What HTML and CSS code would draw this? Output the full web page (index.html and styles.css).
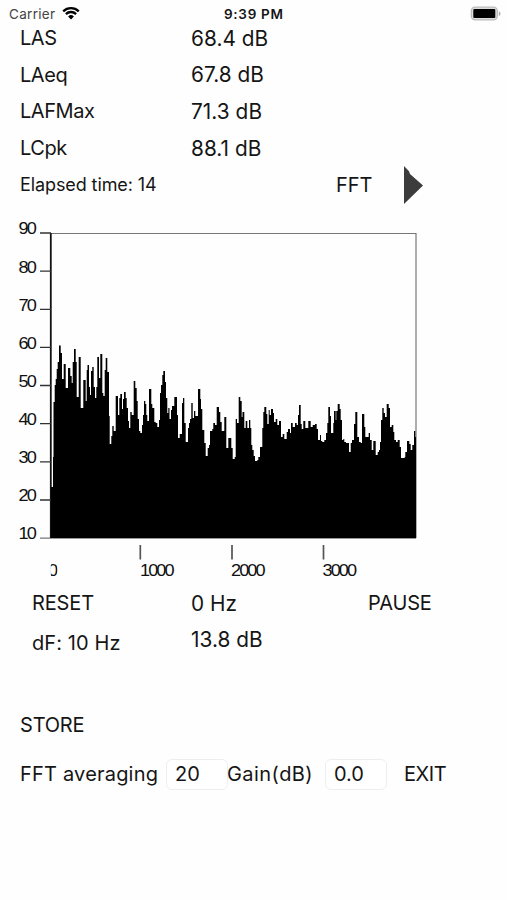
FILE: index.html
```
<!DOCTYPE html>
<html lang="en">
<head>
    <meta charset="utf-8">
    <title>Sound Level Meter</title>
    <link rel="stylesheet" href="styles.css">
</head>
<body>

<div class="status-bar">
    <span class="carrier">Carrier</span>
    <svg class="wifi" width="18" height="14" viewBox="0 0 18 14">
        <path d="M1.2 5.3a11.2 11.2 0 0 1 15.6 0" />
        <path d="M3.9 8.1a7.3 7.3 0 0 1 10.2 0" />
        <path class="wifi-dot" d="M9 13.4L6.1 10.4a4.1 4.1 0 0 1 5.8 0z" />
    </svg>
    <span class="clock">9:39 PM</span>
    <svg class="battery" width="31" height="15" viewBox="0 0 31 15">
        <rect class="battery-case" x="1.3" y="1.2" width="26" height="12.6" rx="3.8" />
        <rect x="3.3" y="3" width="22" height="9" rx="1" />
        <path class="battery-tip" d="M28.8 5.2c2.2.8 2.2 4 0 4.8z" />
    </svg>
</div>

<div class="levels">
    <div class="level-row"><span class="name">LAS</span><span class="value">68.4 dB</span></div>
    <div class="level-row"><span class="name">LAeq</span><span class="value">67.8 dB</span></div>
    <div class="level-row"><span class="name">LAFMax</span><span class="value">71.3 dB</span></div>
    <div class="level-row"><span class="name">LCpk</span><span class="value">88.1 dB</span></div>
    <div class="level-row">
        <span class="elapsed">Elapsed time: 14</span>
        <span class="mode">FFT</span>
        <svg class="next" width="20" height="38" viewBox="0 0 20 38"><path d="M0 0L5 5.3L6 8L19 19.5L0 38z" /></svg>
    </div>
</div>

<svg class="chart" width="507" height="380" viewBox="0 210 507 380">
    <!-- frame -->
    <path class="frame" d="M50 233.5H416V538" />
    <path class="base" d="M40 538.2H416" />
    <path class="axis" d="M50.8 233V538" />

    <!-- level ticks -->
    <path class="tick" d="M40 233H51M40 271.2H51M40 309.3H51M40 347.4H51M40 385.5H51M40 423.6H51M40 461.8H51M40 500H51" />
    <g class="level-labels">
        <text x="18.5" y="234.5">90</text>
        <text x="18.5" y="272.6">80</text>
        <text x="18.5" y="310.7">70</text>
        <text x="18.5" y="348.8">60</text>
        <text x="18.5" y="387">50</text>
        <text x="18.5" y="425">40</text>
        <text x="18.5" y="463.2">30</text>
        <text x="18.5" y="501.3">20</text>
        <text x="18.5" y="539.4">10</text>
    </g>

    <!-- spectrum -->
    <path class="spectrum" d="M51 538V487H53V457H53.5V402H54.7V385H55.7V379H56.7V369H57.7V362H59V345.5H60.7V353H62V379H63.7V364H65.7V388H68V368H70.3V376H71.7V383H72.7V362H74V349H75.7V362H76.7V397H78.7V357H80.7V408H83.3V380H85.7V401H86.7V370H87.5V365H89V387H90V395H91V371H92.3V367H93.7V387H95V398H96.3V387H97.3V357H99V378H100.3V354H102.3V393H103.3V396H104.7V370H105.7V358H107.3V372H109V416H109.7V444H111.3V436H112.3V426H113.7V431H115.7V396H118V415H119.3V398H120.3V394H122V409H123V399H124V392H125.7V398H126.7V408H128V421H129V428H130.3V412H131.7V415H133.7V381H135.3V388H136.7V401H137.7V419H139V431H140.3V433H142V425H143V415H144V401H145.3V404H146.3V415H147.3V421H149V389H151.3V404H152.3V408H154.3V422H155.7V423H157.3V427H159V420H160V393H161V385H162.3V375H163.3V371H165V382H166V398H167.3V413H168.3V408H169.5V419H171V410H172V406H174.3V397H177V415H178V438H179.7V434H182V403H183V398H184.3V423H185.7V442H188V428H189V423H190V419H191.3V403H192.7V418H194V411H195.3V416H198V389H200.3V399H201V409H202.3V430H204.3V443H205.7V456H207.7V448H209V445H210V431H212.3V429H213.3V423H215V425H216.7V407H219V412H220.3V422H221.7V431H224.3V417H226.3V448H228.3V438H231.3V448H232.7V459H234.7V457H235.7V419H237V423H238.7V397H240.3V401H241.7V417H242.5V412H244.3V428H245.7V421H247.3V428H249V420H250.3V428H251.3V445H252.3V450H253.7V456H255V461H257.3V460H258.3V457H260V447H262.3V428H263.3V412H264.3V407H266.3V414H267.3V424H268.7V410H269.7V415H271V409H273V413H274V422H275.7V419H277.3V425H279V421H281V437H282.7V434H284.3V439H286.7V432H288V429H290V433H291V423H292.7V427H295V423H296.7V425H298V415H299V405H300.7V424H301.7V429H303.3V421H305.3V428H308.3V421H310.7V427H312.7V425H315V424H316.7V429H318V440H320V435H321V441H322.3V442H324.3V440H326V433H327.3V423H328.3V407H330V416H331V433H333.3V423H334V411H335.7V420H336.3V411H337.7V404H339.7V409H340.7V420H342V440H343.3V439H344.3V442H346V443H349V452H350.7V443H352V440H354V424H355.3V412H357.3V437H359V442H360.7V443H362V414H364.3V427H365.3V437H368.7V433H370V440H371.7V450H373.3V441H375.7V455H377.7V452H379V450H380V442H381V420H382.3V408H383.7V413H385V417H386.7V404H388.7V408H390V427H391.7V425H393.3V432H394.3V440H396V442H397.7V440H399.7V447H401V458H404.7V457H405.3V452H407V441H409.3V444H410.7V450H412.3V445H414V431H415.3V437H416V538Z" />

    <!-- frequency ticks -->
    <path class="freq-tick" d="M140.3 545V559.5M232 545V559.5M323.5 545V559.5" />
    <g class="freq-labels">
        <text class="zero" x="48" y="576.5">0</text>
        <text x="140" y="576.5">1000</text>
        <text x="231" y="576.5">2000</text>
        <text x="322.5" y="576.5">3000</text>
    </g>
</svg>

<div class="readout">
    <span class="reset">RESET</span>
    <span class="value">0 Hz</span>
    <span class="pause">PAUSE</span>
    <span class="df">dF: 10 Hz</span>
    <span class="value">13.8 dB</span>
</div>

<div class="store">STORE</div>

<form class="settings">
    <label class="avg-label" for="averaging">FFT averaging</label>
    <input class="averaging" id="averaging" type="text" value="20">
    <label class="gain-label" for="gain">Gain(dB)</label>
    <input class="gain" id="gain" type="text" value="0.0">
    <span class="exit">EXIT</span>
</form>

</body>
</html>
```

FILE: styles.css
```
body {
    margin: 0;
    background-color: #fefefe;
    color: #151515;
    font-family: Inter, "Liberation Sans", sans-serif;
    font-size: 20px;
    white-space: nowrap;
}

svg {
    display: block;
}

/* Status bar */
.status-bar {
    display: grid;
    grid-template-columns: 53px 171px 237px 31px;
    grid-template-rows: 20px;
    padding-left: 9px;
    height: 20px;
    align-items: center;
}

.carrier {
    grid-column: 1;
    font-size: 13.5px;
    color: #444;
    letter-spacing: 0.3px;
    padding-top: 8px;
}

.wifi {
    grid-column: 2;
    margin-top: 5px;
    fill: none;
    stroke: #000;
    stroke-width: 2.3;
}

.wifi-dot {
    fill: #000;
    stroke: none;
}

.clock {
    grid-column: 3;
    font-size: 13.5px;
    font-weight: 600;
    letter-spacing: 0.7px;
    margin-left: -9px;
    padding-top: 8px;
}

.battery {
    grid-column: 4;
    margin-top: 6px;
}

.battery-case {
    fill: #ddd;
    stroke: #bbb;
    stroke-width: 1.3;
}

.battery-tip {
    fill: #aaa;
}

/* Levels */
.level-row {
    display: grid;
    grid-template-columns: 171px 145px 68px 20px;
    align-items: center;
    height: 36.6px;
    padding-left: 20px;
}

.name {
    letter-spacing: -0.45px;
}

.value {
    font-size: 20.8px;
    letter-spacing: 0.05px;
}

.elapsed {
    font-size: 18px;
    letter-spacing: -0.1px;
    margin-top: -2px;
}

.mode {
    grid-column: 3;
}

.next {
    grid-column: 4;
    fill: #3c3c3c;
}

/* Chart */
.chart {
    margin-top: 7px;
}

.frame,
.base {
    fill: none;
    stroke: #777;
    stroke-width: 1.2;
}

.axis {
    stroke: #111;
    stroke-width: 1.8;
}

.tick {
    stroke: #333;
    stroke-width: 1.3;
}

.freq-tick {
    stroke: #555;
    stroke-width: 1.7;
}

.level-labels,
.freq-labels {
    font-family: "Liberation Sans", Arial, sans-serif;
    font-size: 16.5px;
    fill: #111;
    letter-spacing: -1.75px;
}

/* wide digits set tight */
.level-labels text,
.freq-labels text {
    transform: scaleX(1.1);
    transform-box: fill-box;
    transform-origin: left center;
}

.freq-labels .zero {
    clip-path: inset(0 0 0 2.6px);
}

.spectrum {
    fill: #000;
}

/* Readout */
.readout {
    display: grid;
    grid-template-columns: 159px 177px 80px;
    grid-template-rows: 36.6px 36.6px;
    align-items: center;
    padding-left: 32px;
    margin-top: -5px;
}

.reset,
.pause {
    letter-spacing: -0.15px;
}

.df {
    padding-top: 7px;
    letter-spacing: 0.1px;
}

.store {
    padding-left: 20px;
    margin-top: 55px;
    line-height: 24px;
    letter-spacing: -0.2px;
}

/* Settings */
.settings {
    display: grid;
    grid-template-columns: 146px 61px 98px 79px 60px;
    align-items: center;
    height: 32px;
    margin-top: 21px;
    padding-left: 20px;
}

.avg-label {
    letter-spacing: 0.2px;
}

.gain-label {
    letter-spacing: 0.45px;
}

.exit {
    letter-spacing: -0.4px;
}

.settings input {
    box-sizing: border-box;
    width: 62px;
    height: 31px;
    padding: 0 8px;
    border: 1px solid #eee;
    border-radius: 6px;
    background-color: #fff;
    color: inherit;
    font: inherit;
}
```
